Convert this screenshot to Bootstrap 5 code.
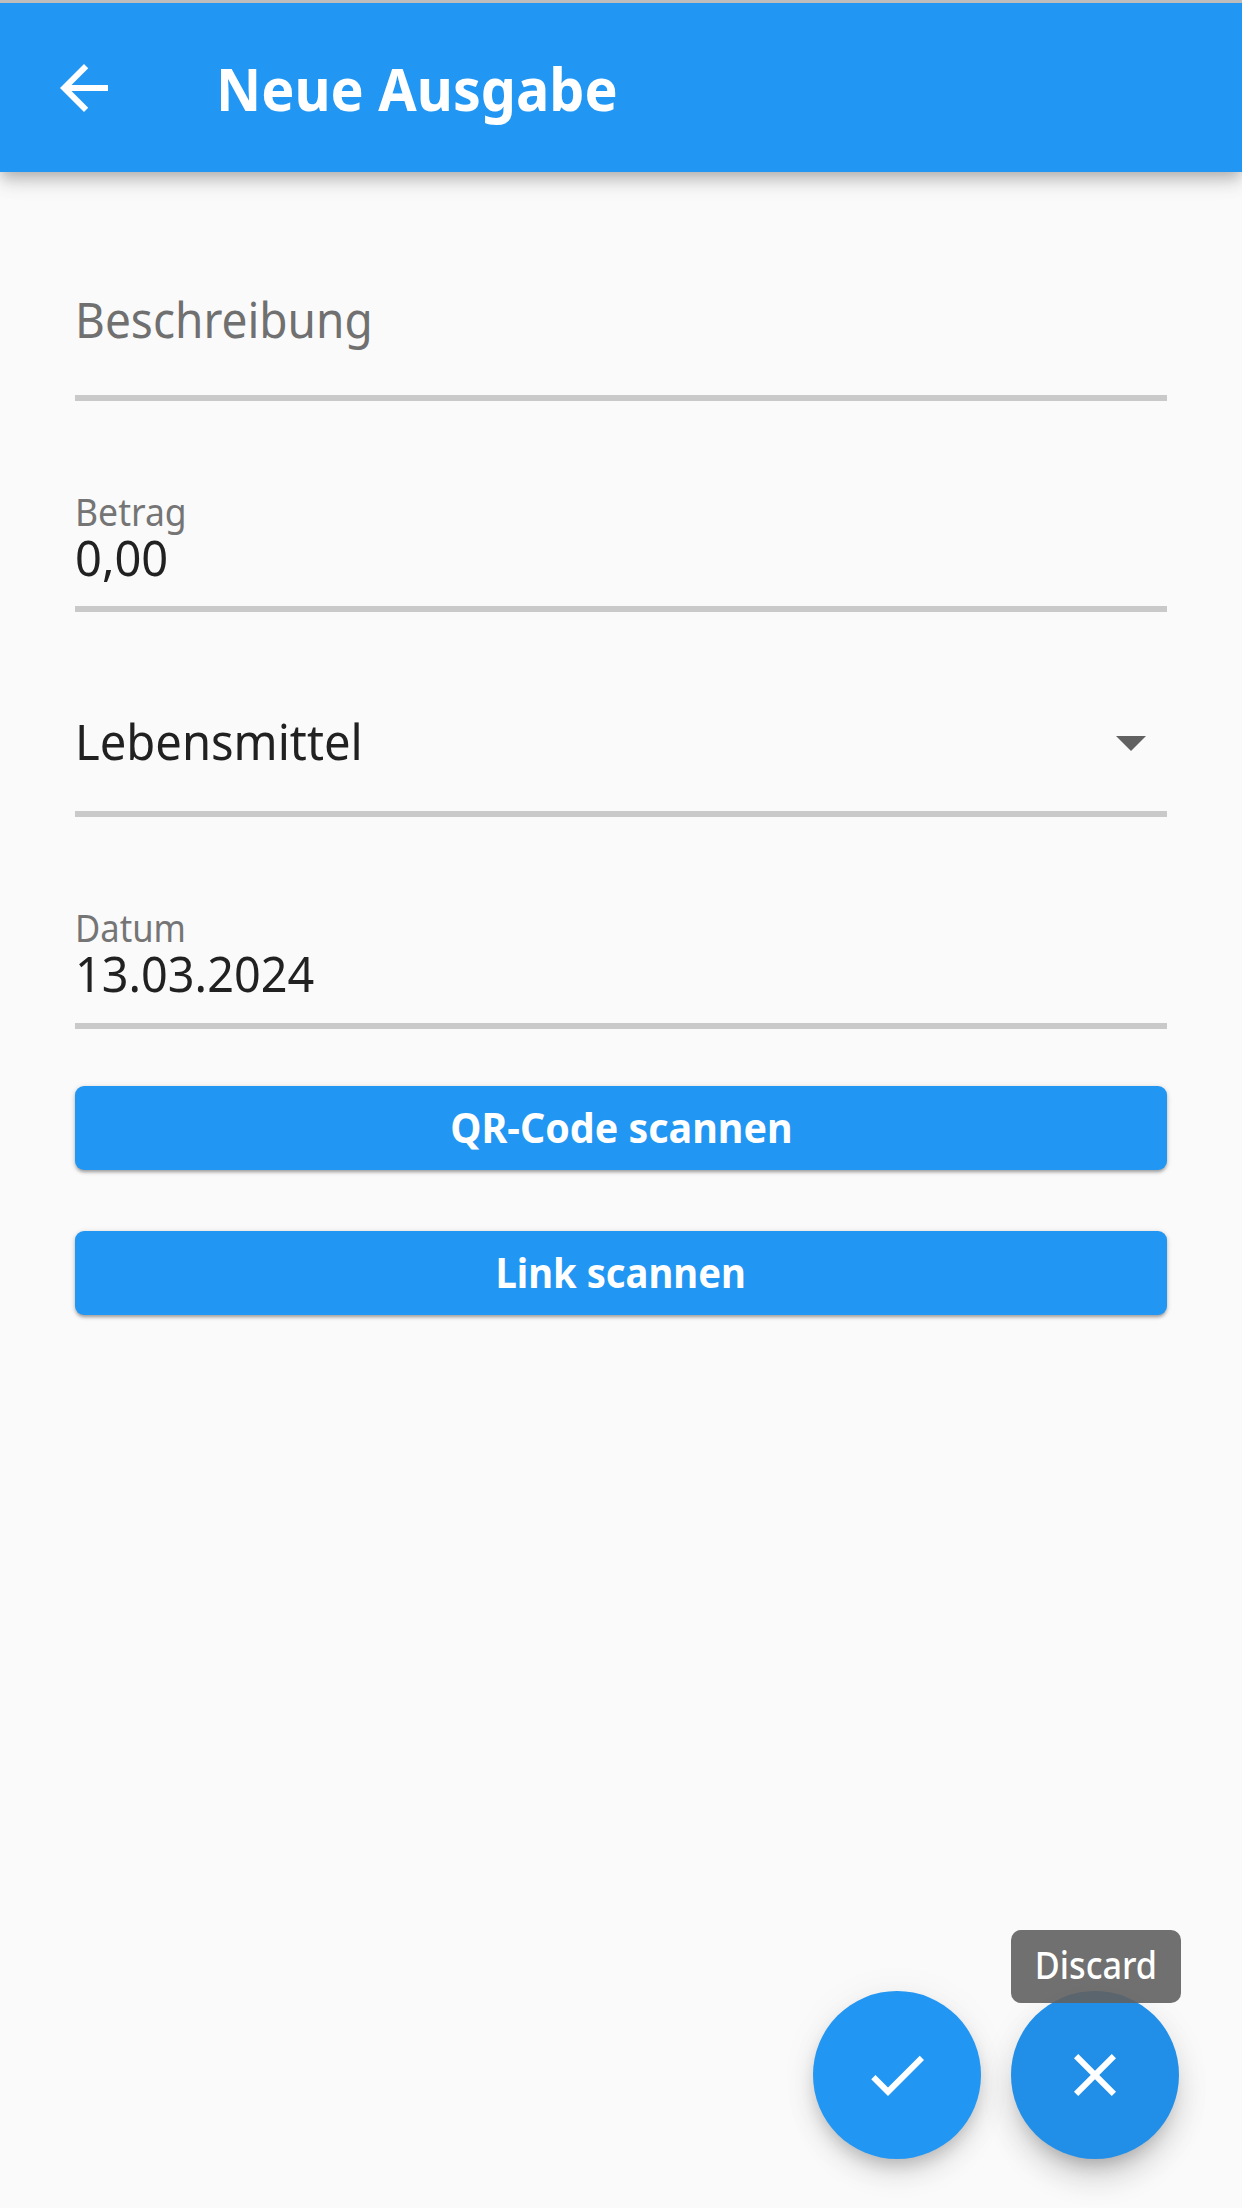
<!DOCTYPE html>
<html lang="de">
<head>
<meta charset="utf-8">
<meta name="viewport" content="width=device-width, initial-scale=1">
<title>Neue Ausgabe</title>
<link href="https://cdn.jsdelivr.net/npm/bootstrap@5.3.0/dist/css/bootstrap.min.css" rel="stylesheet">
<style>
  body { height: 2208px; background: #fafafa; color: #212121; font-family: "Noto Sans", "Open Sans", sans-serif; font-size: 50px; overflow: hidden; }
  .app-header { height: 172px; border-top: 3px solid #bdbdbd; padding: 0 48px; background: #2196f3; box-shadow: 0 6px 12px -3px rgba(0,0,0,.2), 0 12px 15px rgba(0,0,0,.1), 0 3px 30px rgba(0,0,0,.08); clip-path: inset(0 0 -30px 0); }
  .glyph { width: 72px; height: 72px; fill: currentColor; display: block; flex: none; }
  .app-title { font-size: 60px; line-height: 70px; font-weight: 700; margin: 0 0 0 96px; }
  .fit { display: inline-block; white-space: nowrap; transform: scaleX(var(--fit)); transform-origin: left center; }
  .btn .fit, .hint .fit { transform-origin: center; }
  .entry-form { padding: 0 75px; }
  .field { border-bottom: 6px solid #c9c9c9; }
  .field-description { height: 229px; padding-bottom: 46px; }
  .field-amount { height: 211px; padding-bottom: 23px; }
  .field-category { height: 205px; padding-bottom: 40px; }
  .field-date { height: 212px; padding-bottom: 24px; }
  .field-single { line-height: 60px; }
  .field-label { font-size: 38px; line-height: 40px; color: #757575; }
  .field-value { line-height: 52px; }
  .placeholder-text { color: #707070; }
  .caret { color: #616161; margin: -7px 0; }
  .action { height: 84px; border: 0; border-radius: 9px; padding: 0 0 3px; font-size: 42px; line-height: 1; font-weight: 700; background: #2196f3 !important; box-shadow: 0 3px 3px -1px rgba(0,0,0,.2), 0 2px 4px rgba(0,0,0,.16), 0 1px 6px rgba(0,0,0,.1); }
  .actions { margin-top: 57px; gap: 61px; }
  .fabs { gap: 30px; margin: 0 63px 49px 0; }
  .fab { width: 168px; height: 168px; padding: 0; border: 0; background: #2196f3 !important; box-shadow: 0 9px 15px -3px rgba(0,0,0,.16), 0 16px 28px rgba(0,0,0,.1), 0 3px 40px rgba(0,0,0,.05); }
  .fab-hover { background: #218fe8 !important; box-shadow: 0 15px 15px -9px rgba(0,0,0,.18), 0 20px 30px rgba(0,0,0,.13), 0 9px 40px rgba(0,0,0,.06); }
  .hint { left: 0; top: -61px; width: 170px; height: 73px; border-radius: 10px; padding-bottom: 6px; background: rgba(97,97,97,.9); font-size: 38px; font-weight: 500; line-height: 1; color: #fff; }
</style>
<script src="https://cdn.jsdelivr.net/npm/bootstrap@5.3.0/dist/js/bootstrap.bundle.min.js"></script>
</head>
<body class="d-flex flex-column">
  <header class="app-header d-flex align-items-center text-white flex-shrink-0">
    <svg class="glyph" viewBox="0 0 24 24" aria-label="Zurück"><path d="M20 11H7.83l5.59-5.59L12 4l-8 8 8 8 1.41-1.41L7.83 13H20v-2z"/></svg>
    <h1 class="app-title"><span class="fit" style="--fit:.927">Neue Ausgabe</span></h1>
  </header>

  <main class="entry-form d-flex flex-column">
    <div class="field field-description field-single placeholder-text d-flex align-items-end">
      <span class="fit" style="--fit:.92">Beschreibung</span>
    </div>
    <div class="field field-amount d-flex flex-column justify-content-end align-items-start">
      <span class="field-label fit" style="--fit:.935">Betrag</span>
      <span class="field-value fit" style="--fit:.94">0,00</span>
    </div>
    <div class="field field-category field-single d-flex align-items-end justify-content-between">
      <span class="fit" style="--fit:.943">Lebensmittel</span>
      <svg class="glyph caret" viewBox="0 0 24 24"><path d="M7 10l5 5 5-5z"/></svg>
    </div>
    <div class="field field-date d-flex flex-column justify-content-end align-items-start">
      <span class="field-label fit" style="--fit:.91">Datum</span>
      <span class="field-value fit" style="--fit:.936">13.03.2024</span>
    </div>
    <div class="actions d-flex flex-column">
      <button type="button" class="btn btn-primary action d-flex align-items-center justify-content-center"><span class="fit" style="--fit:.938">QR-Code scannen</span></button>
      <button type="button" class="btn btn-primary action d-flex align-items-center justify-content-center"><span class="fit" style="--fit:.91">Link scannen</span></button>
    </div>
  </main>

  <div class="fabs d-flex justify-content-end mt-auto">
    <button type="button" class="btn btn-primary rounded-circle fab d-flex align-items-center justify-content-center" aria-label="Speichern">
      <svg class="glyph" viewBox="0 0 24 24"><path d="M9 16.17L4.83 12l-1.42 1.41L9 19 21 7l-1.41-1.41z"/></svg>
    </button>
    <div class="position-relative">
      <button type="button" class="btn btn-primary rounded-circle fab fab-hover d-flex align-items-center justify-content-center" aria-label="Discard">
        <svg class="glyph" viewBox="0 0 24 24"><path d="M19 6.41L17.59 5 12 10.59 6.41 5 5 6.41 10.59 12 5 17.59 6.41 19 12 13.41 17.59 19 19 17.59 13.41 12z"/></svg>
      </button>
      <div class="hint position-absolute d-flex align-items-center justify-content-center"><span class="fit" style="--fit:.9">Discard</span></div>
    </div>
  </div>
</body>
</html>
